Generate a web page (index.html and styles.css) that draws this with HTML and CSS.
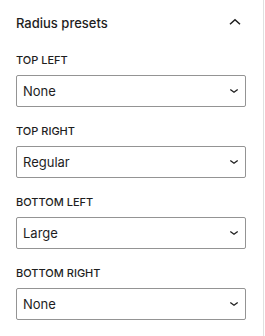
FILE: index.html
```
<!DOCTYPE html>
<html lang="en">

<head>
	<meta charset="utf-8">
	<title>Radius presets</title>
	<link rel="stylesheet" href="styles.css">
</head>

<body>
	<div class="panel">
		<div class="panel-head">
			<h2>Radius presets</h2>
			<svg class="toggle" width="24" height="24" viewBox="0 0 24 24"><path d="M7 14.3 12 9.8l5 4.5" fill="none" stroke="#1e1e1e" stroke-width="1.5"/></svg>
		</div>
		<div class="field">
			<label for="tl">Top left</label>
			<div class="sel">
				<select id="tl"><option>None</option><option>Small</option><option>Regular</option><option>Large</option></select>
				<svg class="arr" width="10" height="6" viewBox="0 0 10 6"><path d="M1.3 1.5 5 4.3 8.7 1.5" fill="none" stroke="#1e1e1e" stroke-width="1.3"/></svg>
			</div>
		</div>
		<div class="field">
			<label for="tr">Top right</label>
			<div class="sel">
				<select id="tr"><option>None</option><option>Small</option><option selected>Regular</option><option>Large</option></select>
				<svg class="arr" width="10" height="6" viewBox="0 0 10 6"><path d="M1.3 1.5 5 4.3 8.7 1.5" fill="none" stroke="#1e1e1e" stroke-width="1.3"/></svg>
			</div>
		</div>
		<div class="field">
			<label for="bl">Bottom left</label>
			<div class="sel">
				<select id="bl"><option>None</option><option>Small</option><option>Regular</option><option selected>Large</option></select>
				<svg class="arr" width="10" height="6" viewBox="0 0 10 6"><path d="M1.3 1.5 5 4.3 8.7 1.5" fill="none" stroke="#1e1e1e" stroke-width="1.3"/></svg>
			</div>
		</div>
		<div class="field">
			<label for="br">Bottom right</label>
			<div class="sel">
				<select id="br"><option>None</option><option>Small</option><option>Regular</option><option>Large</option></select>
				<svg class="arr" width="10" height="6" viewBox="0 0 10 6"><path d="M1.3 1.5 5 4.3 8.7 1.5" fill="none" stroke="#1e1e1e" stroke-width="1.3"/></svg>
			</div>
		</div>
	</div>
</body>

</html>
```

FILE: styles.css
```
body {
	margin: 0;
	background: #fff;
	color: #1e1e1e;
	font-family: Inter, "Liberation Sans", sans-serif;
}

.panel {
	width: 264px;
	min-height: 336px;
	box-sizing: border-box;
	padding: 0 17px 0 16px;
	border-right: 1px solid #e0e0e0;
}

.panel-head {
	display: flex;
	align-items: center;
	justify-content: space-between;
	padding-top: 13px;
	margin-bottom: 19px;
	height: 20px;
}

h2 {
	margin: 0;
	font-size: 13px;
	font-weight: 500;
	line-height: 20px;
}

.toggle {
	margin-right: -1px;
	margin-top: -3px;
}

.field {
	margin-bottom: 16px;
}

label {
	display: block;
	font-size: 11px;
	font-weight: 500;
	line-height: 16px;
	text-transform: uppercase;
	margin-bottom: 7px;
}

.sel {
	position: relative;
}

select {
	appearance: none;
	-webkit-appearance: none;
	width: 100%;
	height: 32px;
	box-sizing: border-box;
	margin: 0;
	padding: 0 24px 0 6px;
	border: 1px solid #949494;
	border-radius: 2px;
	background: #fff;
	color: #1e1e1e;
	font-family: inherit;
	font-size: 13px;
	outline: none;
}

.arr {
	position: absolute;
	right: 7px;
	top: 13px;
	pointer-events: none;
}
```
